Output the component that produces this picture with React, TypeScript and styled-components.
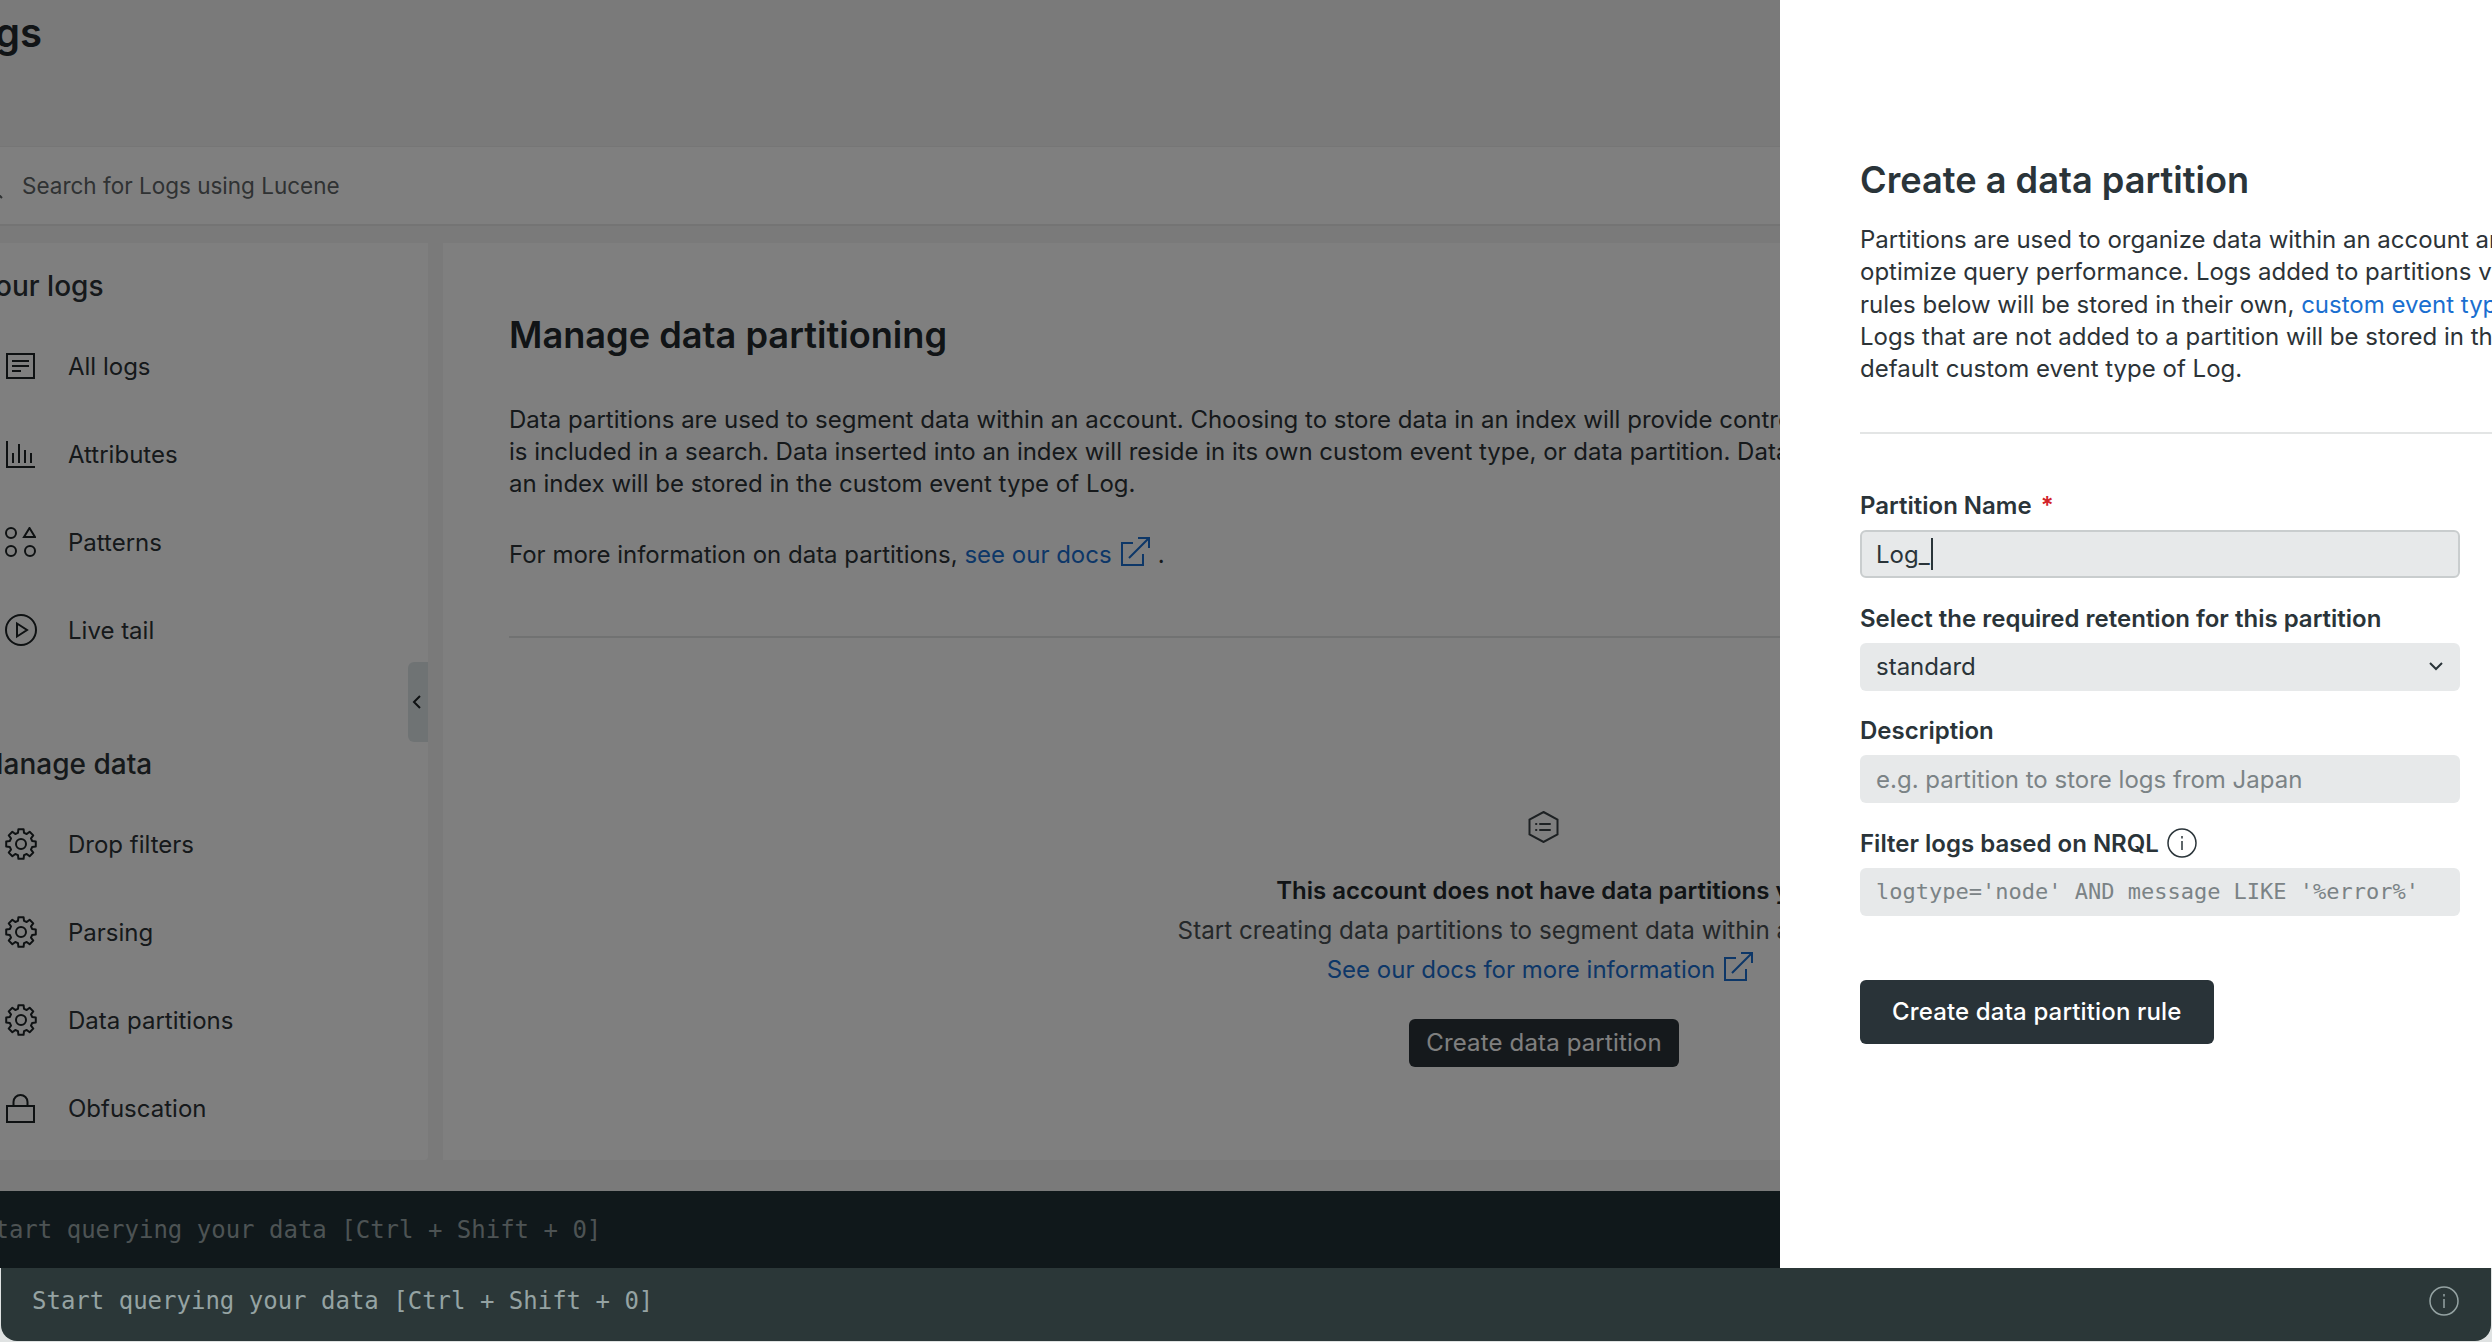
import React from 'react';
import styled, { createGlobalStyle } from 'styled-components';
import { ReactNode } from 'react';

const GlobalStyle = createGlobalStyle`
	html, body {
		margin: 0;
		padding: 0;
		background: #dfe2e2;
	}
	* {
		box-sizing: border-box;
	}
`;

const Screen = styled.div`
	width: 2492px;
	height: 1342px;
	overflow: hidden;
	display: flex;
	flex-direction: column;
	background: #dfe2e2;
	font-family: 'Inter', 'Liberation Sans', sans-serif;
	color: #22292d;
`;

const Stage = styled.div`
	position: relative;
	height: 1268px;
	flex: none;
	overflow: hidden;
`;

const Page = styled.div`
	width: 2698px;
	height: 100%;
	margin-left: -53px;
	display: flex;
	flex-direction: column;
	background: #f4f5f5;
`;

const Header = styled.header`
	height: 146px;
	flex: none;
	padding: 9px 0 0 1px;
`;

const PageTitle = styled.h1`
	margin: 0;
	font-size: 40px;
	line-height: 48px;
	font-weight: 600;
`;

const SearchBar = styled.div`
	height: 80px;
	flex: none;
	margin-bottom: 17px;
	display: flex;
	align-items: center;
	gap: 19px;
	padding-left: 30px;
	background: #fff;
	border-top: 1px solid #eceded;
	border-bottom: 2px solid #e8e9e9;
	font-size: 22.5px;
	color: #5f6567;
`;

const Panels = styled.div`
	flex: 1;
	min-height: 0;
	margin-bottom: 31px;
	display: flex;
	gap: 15px;
`;

const Sidebar = styled.nav`
	position: relative;
	width: 481px;
	flex: none;
	padding: 27px 0 0 59px;
	background: #fff;
	border-radius: 0 0 4px 0;
`;

const SectionTitle = styled.h2<{ $gapTop?: number }>`
	margin: ${({ $gapTop }) => $gapTop ?? 0}px 0 20px -28px;
	font-size: 28px;
	line-height: 32px;
	font-weight: 500;
	color: #2c3337;
`;

const NavRow = styled.div`
	height: 88px;
	display: flex;
	align-items: center;
	gap: 33px;
	font-size: 24px;
	color: #2c3337;
`;

const NavIcon = styled.span`
	width: 29px;
	display: flex;
	justify-content: center;
	color: #1c2225;
`;

const CollapseHandle = styled.div`
	position: absolute;
	top: 419px;
	right: 0;
	width: 20px;
	height: 80px;
	display: flex;
	align-items: center;
	justify-content: center;
	padding-right: 3px;
	background: #dfe6e9;
	border-radius: 6px 0 0 6px;
	color: #1c2225;
`;

const Main = styled.main`
	flex: 1;
	min-width: 0;
	padding: 68px 0 0 66px;
	background: #fff;
`;

const MainTitle = styled.h2`
	margin: 0 0 44.5px;
	font-size: 36.2px;
	line-height: 48px;
	font-weight: 600;
	color: #22292d;
`;

const Copy = styled.p<{ $gapBottom?: number }>`
	margin: 0 0 ${({ $gapBottom }) => $gapBottom ?? 0}px;
	font-size: 24px;
	line-height: 32.3px;
	white-space: nowrap;
	color: #2c3337;
`;

const TextLink = styled.a`
	color: #1a6fd0;
	text-decoration: none;
`;

const ExternalWrap = styled.span`
	display: inline-flex;
	vertical-align: -3px;
	margin: 0 8px 0 8px;
	color: #1a6fd0;
`;

const Rule = styled.hr`
	margin: 0;
	border: 0;
	height: 2px;
	background: #e3e5e5;
`;

const EmptyState = styled.div`
	margin: 173px 0 0 -66px;
	display: flex;
	flex-direction: column;
	align-items: center;
	text-align: center;
	font-size: 24px;
	line-height: 39.5px;
	white-space: nowrap;
`;

const EmptyIcon = styled.span`
	display: flex;
	margin: 0 2px 28px 0;
	color: #3b4246;
`;

const EmptyHeading = styled.div`
	font-weight: 600;
	color: #22292d;
`;

const EmptyText = styled.div`
	font-size: 24.2px;
	color: #4a5154;
`;

const PrimaryButton = styled.button<{ $large?: boolean }>`
	display: block;
	height: ${({ $large }) => ($large ? 64 : 48)}px;
	padding: 0 ${({ $large }) => ($large ? 32 : 17)}px;
	border: 0;
	border-radius: 6px;
	background: ${({ $large }) => ($large ? '#293338' : '#2b3338')};
	color: #fff;
	font-family: inherit;
	font-size: 24px;
	font-weight: ${({ $large }) => ($large ? 500 : 400)};
	letter-spacing: 0.15px;
	white-space: nowrap;
`;

const EmptyButton = styled(PrimaryButton)`
	margin-top: 29px;
`;

const DarkBar = styled.div`
	height: 77px;
	flex: none;
	display: flex;
	align-items: center;
	padding: 1px 0 0 33px;
	background: #203036;
	font-family: 'DejaVu Sans Mono', 'Liberation Mono', monospace;
	font-size: 24px;
	color: #9ba6a8;
`;

const Scrim = styled.div`
	position: absolute;
	inset: 0;
	background: rgba(0, 0, 0, 0.5);
`;

const Drawer = styled.aside`
	position: absolute;
	top: 0;
	right: 0;
	bottom: 0;
	width: 712px;
	overflow: hidden;
	padding: 156px 0 0 80px;
	background: #fff;
`;

const DrawerTitle = styled.h2`
	margin: 0 0 20px;
	font-size: 36.2px;
	line-height: 48px;
	font-weight: 600;
	color: #2a3439;
	white-space: nowrap;
`;

const DrawerRule = styled(Rule)`
	margin: 47px 0 57px;
`;

const Form = styled.div`
	width: 600px;
	display: flex;
	flex-direction: column;
	gap: 25.4px;
`;

const Field = styled.div``;

const Label = styled.div`
	height: 29px;
	margin-bottom: 10px;
	display: flex;
	align-items: center;
	font-size: 24px;
	font-weight: 600;
	color: #2a3439;
	white-space: nowrap;
`;

const Required = styled.span`
	margin-left: 9px;
	color: #d2232a;
`;

const InfoWrap = styled.span`
	display: flex;
	margin-left: 8px;
`;

const InputBox = styled.div<{ $focused?: boolean; $muted?: boolean; $mono?: boolean }>`
	height: 48px;
	display: flex;
	align-items: center;
	justify-content: flex-start;
	padding: 0 ${({ $focused }) => ($focused ? 14 : 16)}px;
	background: #e7e9ea;
	border-radius: 6px;
	border: ${({ $focused }) => ($focused ? '2px solid #c9cdce' : '0')};
	font-family: ${({ $mono }) =>
		$mono ? "'DejaVu Sans Mono', 'Liberation Mono', monospace" : 'inherit'};
	font-size: ${({ $mono }) => ($mono ? 22 : 24)}px;
	color: ${({ $muted }) => ($muted ? '#7b8386' : '#2a3439')};
	white-space: nowrap;
`;

const SelectBox = styled(InputBox)`
	justify-content: space-between;
	padding-right: 17px;
`;

const Caret = styled.span`
	width: 2px;
	height: 32px;
	margin-left: 1px;
	background: #2a3439;
`;

const SubmitButton = styled(PrimaryButton)`
	margin-top: 64px;
`;

const QueryBar = styled.div`
	height: 73px;
	flex: none;
	margin: 0 1px 1px;
	display: flex;
	align-items: center;
	justify-content: space-between;
	padding: 0 32px 8px 31px;
	background: #2b3738;
	border-radius: 0 0 16px 16px;
	font-family: 'DejaVu Sans Mono', 'Liberation Mono', monospace;
	font-size: 24px;
	color: #95a3a3;
`;

const Stroke = styled.svg`
	display: block;
	flex: none;
	fill: none;
	stroke: currentColor;
`;

const SearchIcon = () => (
	<Stroke width="26" height="26" viewBox="0 0 26 26" strokeWidth="2">
		<circle cx="11" cy="11" r="9" />
		<path d="M18 18l7 7" />
	</Stroke>
);

const LogsIcon = () => (
	<Stroke width="29" height="26" viewBox="0 0 29 26" strokeWidth="2">
		<rect x="1" y="1" width="27" height="24" />
		<path d="M6 8h17M6 13h17M6 18h9" />
	</Stroke>
);

const AttributesIcon = () => (
	<Stroke width="29" height="27" viewBox="0 0 29 27" strokeWidth="2">
		<path d="M1 0v26h28M7 12v10M13 3v19M19 9v13M25 12v10" />
	</Stroke>
);

const PatternsIcon = () => (
	<Stroke width="31" height="30" viewBox="0 0 31 30" strokeWidth="2">
		<circle cx="6" cy="6" r="5" />
		<path d="M24.5 1l5.5 9H19z" />
		<circle cx="6" cy="24" r="5" />
		<circle cx="25" cy="24" r="5" />
	</Stroke>
);

const PlayIcon = () => (
	<Stroke width="32" height="32" viewBox="0 0 32 32" strokeWidth="2">
		<circle cx="16" cy="16" r="15" />
		<path d="M12 9.5v13l10-6.5z" />
	</Stroke>
);

// eight teeth round a ring, worked out once instead of typing the whole outline
const gearPath = (() => {
	const pts: string[] = [];
	const c = 16;
	for (let i = 0; i < 8; i++) {
		const a = (i * Math.PI) / 4;
		const step = Math.PI / 4;
		[
			[11.5, a - step * 0.34],
			[15, a - step * 0.22],
			[15, a + step * 0.22],
			[11.5, a + step * 0.34],
		].forEach(([r, t]) => {
			pts.push(`${(c + r * Math.cos(t)).toFixed(2)} ${(c + r * Math.sin(t)).toFixed(2)}`);
		});
	}
	return `M${pts.join('L')}Z`;
})();

const GearIcon = () => (
	<Stroke width="32" height="32" viewBox="0 0 32 32" strokeWidth="2" strokeLinejoin="round">
		<path d={gearPath} />
		<circle cx="16" cy="16" r="5" />
	</Stroke>
);

const LockIcon = () => (
	<Stroke width="29" height="30" viewBox="0 0 29 30" strokeWidth="2">
		<rect x="1" y="13" width="27" height="16" />
		<path d="M7.5 13V9a7 7 0 0 1 14 0v4" />
	</Stroke>
);

const ChevronLeft = () => (
	<Stroke width="9" height="14" viewBox="0 0 9 14" strokeWidth="2">
		<path d="M8 1L2 7l6 6" />
	</Stroke>
);

const ChevronDown = () => (
	<Stroke width="14" height="9" viewBox="0 0 14 9" strokeWidth="2">
		<path d="M1 1l6 6 6-6" />
	</Stroke>
);

const ExternalIcon = () => (
	<Stroke width="30" height="29" viewBox="0 0 30 29" strokeWidth="2">
		<path d="M13 6H2v22h21V17M9 21L28 2M18 1h11v10" />
	</Stroke>
);

const HexIcon = () => (
	<Stroke width="31" height="32" viewBox="0 0 31 32" strokeWidth="2" strokeLinecap="round">
		<path d="M15.5 1L29.5 8.5v15L15.5 31 1.5 23.5v-15z" />
		<path d="M12 13h10M12 19h10M8 13h.4M8 19h.4" />
	</Stroke>
);

const InfoIcon = () => (
	<Stroke width="30" height="30" viewBox="0 0 30 30" strokeWidth="1.5">
		<circle cx="15" cy="15" r="14" />
		<path d="M15 13v9M15 8v2.5" />
	</Stroke>
);

interface NavItem {
	label: string;
	icon: ReactNode;
}

const logItems: NavItem[] = [
	{ label: 'All logs', icon: <LogsIcon /> },
	{ label: 'Attributes', icon: <AttributesIcon /> },
	{ label: 'Patterns', icon: <PatternsIcon /> },
	{ label: 'Live tail', icon: <PlayIcon /> },
];

const dataItems: NavItem[] = [
	{ label: 'Drop filters', icon: <GearIcon /> },
	{ label: 'Parsing', icon: <GearIcon /> },
	{ label: 'Data partitions', icon: <GearIcon /> },
	{ label: 'Obfuscation', icon: <LockIcon /> },
];

const NavRows = ({ items }: { items: NavItem[] }) => (
	<>
		{items.map((item) => (
			<NavRow key={item.label}>
				<NavIcon>{item.icon}</NavIcon>
				{item.label}
			</NavRow>
		))}
	</>
);

export default function App() {
	return (
		<Screen>
			<GlobalStyle />
			<Stage>
				<Page>
					<Header>
						<PageTitle>Logs</PageTitle>
					</Header>
					<SearchBar>
						<SearchIcon />
						Search for Logs using Lucene
					</SearchBar>
					<Panels>
						<Sidebar>
							<SectionTitle>Your logs</SectionTitle>
							<NavRows items={logItems} />
							<SectionTitle $gapTop={74}>Manage data</SectionTitle>
							<NavRows items={dataItems} />
							<CollapseHandle>
								<ChevronLeft />
							</CollapseHandle>
						</Sidebar>
						<Main>
							<MainTitle>Manage data partitioning</MainTitle>
							<Copy $gapBottom={37}>
								Data partitions are used to segment data within an account. Choosing to store data in an index will provide control over which data
								<br />
								is included in a search. Data inserted into an index will reside in its own custom event type, or data partition. Data not added to
								<br />
								an index will be stored in the custom event type of Log.
							</Copy>
							<Copy $gapBottom={64.5}>
								For more information on data partitions, <TextLink>see our docs</TextLink>
								<ExternalWrap>
									<ExternalIcon />
								</ExternalWrap>
								.
							</Copy>
							<Rule />
							<EmptyState>
								<EmptyIcon>
									<HexIcon />
								</EmptyIcon>
								<EmptyHeading>This account does not have data partitions yet</EmptyHeading>
								<EmptyText>Start creating data partitions to segment data within an account.</EmptyText>
								<TextLink>
									See our docs for more information
									<ExternalWrap>
										<ExternalIcon />
									</ExternalWrap>
								</TextLink>
								<EmptyButton>Create data partition</EmptyButton>
							</EmptyState>
						</Main>
					</Panels>
					<DarkBar>Start querying your data [Ctrl + Shift + 0]</DarkBar>
				</Page>
				<Scrim />
				<Drawer>
					<DrawerTitle>Create a data partition</DrawerTitle>
					<Copy>
						Partitions are used to organize data within an account and
						<br />
						optimize query performance. Logs added to partitions via the
						<br />
						rules below will be stored in their own, <TextLink>custom event type</TextLink>.
						<br />
						Logs that are not added to a partition will be stored in the
						<br />
						default custom event type of Log.
					</Copy>
					<DrawerRule />
					<Form>
						<Field>
							<Label>
								Partition Name<Required>*</Required>
							</Label>
							<InputBox $focused>
								Log_
								<Caret />
							</InputBox>
						</Field>
						<Field>
							<Label>Select the required retention for this partition</Label>
							<SelectBox>
								standard
								<ChevronDown />
							</SelectBox>
						</Field>
						<Field>
							<Label>Description</Label>
							<InputBox $muted>e.g. partition to store logs from Japan</InputBox>
						</Field>
						<Field>
							<Label>
								Filter logs based on NRQL
								<InfoWrap>
									<InfoIcon />
								</InfoWrap>
							</Label>
							<InputBox $muted $mono>
								logtype='node' AND message LIKE '%error%'
							</InputBox>
						</Field>
					</Form>
					<SubmitButton $large>Create data partition rule</SubmitButton>
				</Drawer>
			</Stage>
			<QueryBar>
				Start querying your data [Ctrl + Shift + 0]
				<InfoIcon />
			</QueryBar>
		</Screen>
	);
}
